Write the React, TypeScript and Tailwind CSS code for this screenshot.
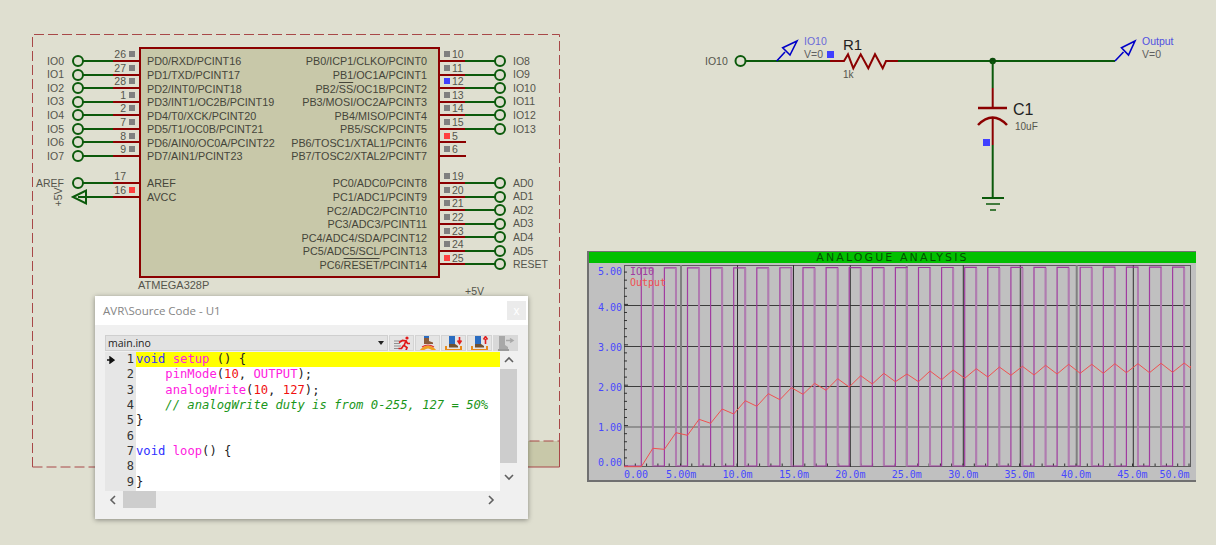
import type { ReactNode } from 'react'

const GREEN = '#0b5a0b'
const RED = '#8b0000'
const GREY_SQ = '#808080'
const RED_SQ = '#ff4040'
const BLUE_SQ = '#4040ff'

type Pin = { name: ReactNode; num: string; net?: string; sq?: string | null; power?: boolean }

const leftPins: (Pin | null)[] = [
  { name: 'PD0/RXD/PCINT16', num: '26', net: 'IO0' },
  { name: 'PD1/TXD/PCINT17', num: '27', net: 'IO1' },
  { name: 'PD2/INT0/PCINT18', num: '28', net: 'IO2' },
  { name: 'PD3/INT1/OC2B/PCINT19', num: '1', net: 'IO3' },
  { name: 'PD4/T0/XCK/PCINT20', num: '2', net: 'IO4' },
  { name: 'PD5/T1/OC0B/PCINT21', num: '7', net: 'IO5' },
  { name: 'PD6/AIN0/OC0A/PCINT22', num: '8', net: 'IO6' },
  { name: 'PD7/AIN1/PCINT23', num: '9', net: 'IO7' },
  null,
  { name: 'AREF', num: '17', net: 'AREF', sq: null },
  { name: 'AVCC', num: '16', sq: RED_SQ, power: true },
]

const rightPins: (Pin | null)[] = [
  { name: 'PB0/ICP1/CLKO/PCINT0', num: '10', net: 'IO8' },
  { name: 'PB1/OC1A/PCINT1', num: '11', net: 'IO9' },
  { name: <>PB2/<span className="overline">SS</span>/OC1B/PCINT2</>, num: '12', net: 'IO10', sq: BLUE_SQ },
  { name: 'PB3/MOSI/OC2A/PCINT3', num: '13', net: 'IO11' },
  { name: 'PB4/MISO/PCINT4', num: '14', net: 'IO12' },
  { name: 'PB5/SCK/PCINT5', num: '15', net: 'IO13' },
  { name: 'PB6/TOSC1/XTAL1/PCINT6', num: '5', sq: RED_SQ },
  { name: 'PB7/TOSC2/XTAL2/PCINT7', num: '6' },
  null,
  { name: 'PC0/ADC0/PCINT8', num: '19', net: 'AD0' },
  { name: 'PC1/ADC1/PCINT9', num: '20', net: 'AD1' },
  { name: 'PC2/ADC2/PCINT10', num: '21', net: 'AD2' },
  { name: 'PC3/ADC3/PCINT11', num: '22', net: 'AD3' },
  { name: 'PC4/ADC4/SDA/PCINT12', num: '23', net: 'AD4' },
  { name: 'PC5/ADC5/SCL/PCINT13', num: '24', net: 'AD5' },
  { name: <>PC6/<span className="overline">RESET</span>/PCINT14</>, num: '25', net: 'RESET', sq: RED_SQ },
]

function LeftPin({ pin }: { pin: Pin | null }) {
  if (!pin) return <div className="h-[13.57px]" />
  const sq = pin.sq === undefined ? GREY_SQ : pin.sq
  return (
    <div className="relative flex h-[13.57px] items-center">
      <span className="w-[32px] whitespace-nowrap text-right text-[10.5px] leading-none text-[#55554c]">{pin.net}</span>
      <svg width="67" height="14" className="ml-[8px] shrink-0 overflow-visible">
        <line x1="40" y1="7" x2="67" y2="7" stroke={RED} strokeWidth="2" />
        <line x1={pin.power ? 6 : 11} y1="7" x2="41" y2="7" stroke={GREEN} strokeWidth="2" />
        {pin.power ? (
          <path d="M1 7 L14 0.5 L14 13.5 Z" fill="none" stroke={GREEN} strokeWidth="2" />
        ) : (
          <circle cx="6" cy="7" r="5" fill="none" stroke={GREEN} strokeWidth="2" />
        )}
      </svg>
      <span className="absolute -top-[7px] right-[13px] text-[10.5px] leading-[14px] text-[#55554c]">{pin.num}</span>
      {sq && <span className="absolute -top-[3px] right-[4px] h-[6px] w-[6px]" style={{ backgroundColor: sq }} />}
    </div>
  )
}

function RightPin({ pin }: { pin: Pin | null }) {
  if (!pin) return <div className="h-[13.57px]" />
  const sq = pin.sq === undefined ? GREY_SQ : pin.sq
  return (
    <div className="relative flex h-[13.57px] items-center">
      <svg width="66" height="14" className="shrink-0 overflow-visible">
        <line x1="0" y1="7" x2="26" y2="7" stroke={RED} strokeWidth="2" />
        {pin.net && (
          <>
            <line x1="25" y1="7" x2="55" y2="7" stroke={GREEN} strokeWidth="2" />
            <circle cx="60" cy="7" r="5" fill="none" stroke={GREEN} strokeWidth="2" />
          </>
        )}
      </svg>
      <span className="ml-[7px] whitespace-nowrap text-[10.5px] leading-none text-[#55554c]">{pin.net}</span>
      <span className="absolute -top-[7px] left-[12px] text-[10.5px] leading-[14px] text-[#55554c]">{pin.num}</span>
      {sq && <span className="absolute -top-[3px] left-[4px] h-[6px] w-[6px]" style={{ backgroundColor: sq }} />}
    </div>
  )
}

function Chip() {
  return (
    <>
      <div className="absolute left-[32px] top-[47px] flex">
        <div className="w-[107px] pt-[7.2px]">
          {leftPins.map((p, i) => <LeftPin key={i} pin={p} />)}
        </div>
        <div className="w-[301px]">
          <div className="flex h-[231px] justify-between border-2 border-[#8b0000] bg-[#c8c8a9] px-[6px] pt-[6px] text-[10.8px] leading-none text-[#45453a]">
            <div>
              {leftPins.map((p, i) => <div key={i} className="flex h-[13.57px] items-center whitespace-nowrap">{p?.name}</div>)}
            </div>
            <div>
              {rightPins.map((p, i) => <div key={i} className="flex h-[13.57px] items-center justify-end whitespace-nowrap pr-[5px]">{p?.name}</div>)}
            </div>
          </div>
          <div className="-ml-[1px] mt-[1px] text-[11px] leading-[13px] text-[#55554c]">ATMEGA328P</div>
        </div>
        <div className="w-[120px] pt-[7.2px]">
          {rightPins.map((p, i) => <RightPin key={i} pin={p} />)}
        </div>
      </div>
      <span className="absolute left-[465px] top-[285px] text-[10.5px] leading-[13px] text-[#55554c]">+5V</span>
      <span className="absolute left-[50px] top-[192px] w-[16px] -rotate-90 whitespace-nowrap text-center text-[10.5px] leading-[13px] text-[#55554c]">+5V</span>
    </>
  )
}

function Sheet() {
  return (
    <svg width="1216" height="545" className="absolute left-0 top-0">
      <rect x="528" y="441" width="31.5" height="26" fill="#c8c8a9" />
      <path d="M32.5 467 L32.5 34.5 L559.5 34.5 L559.5 441 L528 441" fill="none" stroke="#a84848" strokeWidth="1" strokeDasharray="10 4" />
      <path d="M32.5 467 L100 467" fill="none" stroke="#a84848" strokeWidth="1" strokeDasharray="10 4" />
      <path d="M559.5 441 L559.5 467 L528 467" fill="none" stroke="#a84848" strokeWidth="1" />

      {/* RC filter */}
      <circle cx="740.5" cy="61" r="5" fill="none" stroke={GREEN} strokeWidth="2" />
      <line x1="745.5" y1="61" x2="831" y2="61" stroke={GREEN} strokeWidth="2" />
      <path d="M830 61 L844 61 L848 54.3 L853.3 68.3 L860.7 54.3 L868.3 68.3 L875 54.3 L882.7 68.3 L886 61 L899 61" fill="none" stroke={RED} strokeWidth="2" />
      <line x1="898" y1="61" x2="1115" y2="61" stroke={GREEN} strokeWidth="2" />
      <circle cx="992.7" cy="61" r="3.2" fill="#0a4a0a" />
      <line x1="992.7" y1="61" x2="992.7" y2="88" stroke={GREEN} strokeWidth="2" />
      <line x1="992.7" y1="88" x2="992.7" y2="108" stroke={RED} strokeWidth="2" />
      <line x1="978" y1="108" x2="1007" y2="108" stroke={RED} strokeWidth="2.5" />
      <path d="M978 125 Q992.7 110 1007 125" fill="none" stroke={RED} strokeWidth="2.5" />
      <line x1="992.7" y1="118" x2="992.7" y2="145" stroke={RED} strokeWidth="2" />
      <line x1="992.7" y1="145" x2="992.7" y2="198" stroke={GREEN} strokeWidth="2" />
      <line x1="982" y1="198" x2="1004" y2="198" stroke={GREEN} strokeWidth="2" />
      <line x1="986" y1="204" x2="1000" y2="204" stroke={GREEN} strokeWidth="1.5" />
      <line x1="990" y1="210" x2="996" y2="210" stroke={GREEN} strokeWidth="1.5" />

      {/* voltage probes */}
      <path d="M776.7 61 L785 52 M797 41 L782.7 47.7 L790 55 Z" fill="none" stroke="#0000c8" strokeWidth="1.6" />
      <path d="M1115 61 L1123.5 52 M1135 41 L1121.5 47.7 L1128.5 55 Z" fill="none" stroke="#0000c8" strokeWidth="1.6" />
    </svg>
  )
}

function CircuitLabels() {
  return (
    <>
      <span className="absolute left-[705px] top-[54px] text-[10.5px] leading-[14px] text-[#55554c]">IO10</span>
      <div className="absolute left-[804px] top-[35px] text-[10.5px] leading-[13px] text-[#606060]">
        <div className="text-[#6a6ad8]">IO10</div>
        <div className="flex items-center gap-[4px]">V=0<span className="h-[7px] w-[7px] bg-[#4040ff]" /></div>
      </div>
      <div className="absolute left-[843px] top-[36px] flex flex-col gap-[14px]">
        <span className="text-[15px] leading-[18px] text-[#222]">R1</span>
        <span className="text-[10px] leading-[14px] text-[#55554c]">1k</span>
      </div>
      <div className="absolute left-[1142px] top-[35px] text-[10.5px] leading-[13px] text-[#606060]">
        <div className="text-[#5050e0]">Output</div>
        <div>V=0</div>
      </div>
      <div className="absolute left-[1013px] top-[101px] flex flex-col gap-[1px]">
        <span className="text-[16px] leading-[18px] text-[#222]">C1</span>
        <span className="ml-[2px] text-[10px] leading-[14px] text-[#55554c]">10uF</span>
      </div>
      <span className="absolute left-[983px] top-[139px] h-[7px] w-[7px] bg-[#4040ff]" />
    </>
  )
}

function ToolIcon({ kind }: { kind: number }) {
  if (kind === 0) {
    return (
      <svg width="18" height="15" viewBox="0 0 18 15">
        <path d="M1 5h7M1 7.5h6M1 10h7M1 12.5h7" stroke="#909090" strokeWidth="1.2" />
        <circle cx="14" cy="2" r="1.6" fill="#e01818" />
        <path d="M6 6.5 L9.5 4.5 L13 5 L11 9.5 L14 11.5 L13 14.5 M10.5 9.5 L8.5 12.5 L5.5 12.5 M13 5 L14.5 7.5 L17 7.5" fill="none" stroke="#e01818" strokeWidth="1.7" />
      </svg>
    )
  }
  if (kind === 1) {
    return (
      <svg width="20" height="15" viewBox="0 0 20 15">
        <rect x="6" y="0" width="5" height="2" fill="#2a6cc0" />
        <path d="M6 2 h5 v3 l4 1.5 v1.5 h-9 Z" fill="#8a5a3a" />
        <path d="M3 15 Q10 7 17 15" fill="none" stroke="#f0a020" strokeWidth="3" />
        <path d="M4 11 Q10 7 16 11" fill="none" stroke="#e03030" strokeWidth="1.2" />
      </svg>
    )
  }
  if (kind === 4) {
    return (
      <svg width="20" height="15" viewBox="0 0 20 15">
        <path d="M3 0 h6 v9 l3 2 v2 h-9 Z" fill="#a8a8a8" />
        <rect x="2" y="13" width="11" height="2" fill="#9a9a9a" />
        <path d="M10 4.5 h6 M14 2.5 l3 2 l-3 2" fill="none" stroke="#a8a8a8" strokeWidth="1.5" />
      </svg>
    )
  }
  return (
    <svg width="20" height="15" viewBox="0 0 20 15">
      <rect x="5" y="0" width="6" height="8" fill="#2a6cc0" />
      <path d="M5 8 h6 l3 2 v1.5 h-9 Z" fill="#705030" />
      <path d="M2 10 v4 h15 v-4" fill="none" stroke="#e88a18" strokeWidth="2" />
      {kind === 2 ? (
        <path d="M15.5 1 v5 M13.5 4.5 l2 3 l2 -3" fill="none" stroke="#e02020" strokeWidth="1.6" />
      ) : (
        <path d="M15.5 8 v-5 M13.5 3.5 l2 -3 l2 3" fill="none" stroke="#e02020" strokeWidth="1.6" />
      )}
    </svg>
  )
}

function Chevron({ dir }: { dir: 'up' | 'down' | 'left' | 'right' }) {
  const d = { up: 'M1 6 L5 2 L9 6', down: 'M1 3 L5 7 L9 3', left: 'M6 1 L2 5 L6 9', right: 'M3 1 L7 5 L3 9' }[dir]
  return (
    <svg width="10" height="10" viewBox="0 0 10 10">
      <path d={d} fill="none" stroke="#606060" strokeWidth="1.6" />
    </svg>
  )
}

const KW = 'text-[#3030ff]'
const FN = 'text-[#ff20e0]'
const NUM = 'text-[#f01010]'

function CodeWindow() {
  return (
    <div className="absolute left-[95px] top-[296px] flex h-[223px] w-[433px] flex-col bg-[#f0f0f0] shadow-[0_1px_5px_rgba(0,0,0,0.4)]">
      <div className="flex h-[29px] items-center justify-between bg-white pl-[8px] pr-[2px]">
        <span className="font-['Open_Sans'] text-[11.5px] text-[#858585]">AVR\Source Code - U1</span>
        <span className="flex h-[19px] w-[19px] items-center justify-center bg-[#ebebeb] text-[12px] leading-none text-white">x</span>
      </div>
      <div className="flex flex-1 flex-col pl-[10px] pt-[10px]">
        <div className="flex h-[17px] gap-[1px] pb-[1px]">
          <div className="flex h-[16px] w-[283px] items-center justify-between border border-[#cfcfcf] bg-[#e2e2e2] pl-[2px] pr-[3px]">
            <span className="font-['Open_Sans'] text-[10.5px] leading-none text-[#222]">main.ino</span>
            <span className="h-0 w-0 border-x-[3px] border-t-[4px] border-x-transparent border-t-[#222]" />
          </div>
          {[0, 1, 2, 3, 4].map(k => (
            <div key={k} className={k === 4 ? 'flex h-[16px] w-[25px] items-center justify-center overflow-hidden bg-[#d8d8d8]' : 'flex h-[16px] w-[25px] items-center justify-center overflow-hidden border border-[#d4d4d4] bg-[#e4e4e4]'}>
              <ToolIcon kind={k} />
            </div>
          ))}
        </div>
        <div className="flex h-[139px]">
          <div className="relative w-[31px] bg-[#e6e6e6] pr-[2px] text-right font-['DejaVu_Sans_Mono'] text-[12px] text-[#333]">
            <svg width="8" height="8" viewBox="0 0 8 8" className="absolute left-[2px] top-[4px]">
              <path d="M0 4 h4 M3 1 L7 4 L3 7 Z" stroke="#111" strokeWidth="1.4" fill="#111" />
            </svg>
            {[1, 2, 3, 4, 5, 6, 7, 8, 9].map(n => <div key={n} className="h-[15.33px] leading-[15.33px]">{n}</div>)}
          </div>
          <div className="w-[364px] overflow-hidden bg-white font-['DejaVu_Sans_Mono'] text-[12.2px] leading-[15.33px] text-[#222] [&>div]:h-[15.33px] [&>div]:whitespace-pre">
            <div className="bg-[#ffff00]"><span className={KW}>void</span> <span className={FN}>setup</span> () {'{'}</div>
            <div>    <span className={FN}>pinMode</span>(<span className={NUM}>10</span>, <span className={FN}>OUTPUT</span>);</div>
            <div>    <span className={FN}>analogWrite</span>(<span className={NUM}>10</span>, <span className={NUM}>127</span>);</div>
            <div className="italic text-[#1a961a]">    // analogWrite duty is from 0-255, 127 = 50%</div>
            <div>{'}'}</div>
            <div> </div>
            <div><span className={KW}>void</span> <span className={FN}>loop</span>() {'{'}</div>
            <div> </div>
            <div>{'}'}</div>
          </div>
          <div className="flex w-[17px] flex-col items-center">
            <div className="flex h-[17px] items-center"><Chevron dir="up" /></div>
            <div className="h-[94px] w-full bg-[#cdcdcd]" />
            <div className="flex flex-1 items-center"><Chevron dir="down" /></div>
          </div>
        </div>
        <div className="flex h-[17px] w-[395px] items-center">
          <div className="flex w-[18px] justify-center"><Chevron dir="left" /></div>
          <div className="h-full w-[33px] bg-[#cdcdcd]" />
          <div className="flex flex-1 justify-end pr-[4px]"><Chevron dir="right" /></div>
        </div>
      </div>
    </div>
  )
}

// plot coordinates are page pixels, shifted by the plot's own origin
const PX = 624
const PY = 265
const rises = Array.from({ length: 24 }, (_, i) => 641.3 + i * 23.1)

const outputY = [
  466.7, 448.3, 449.3, 432.7, 435.3, 419.3, 423.3, 409, 414, 400.7, 406.3, 393.7, 399.7, 387.7, 394.3, 383.3, 390.3,
  378.7, 387, 375.7, 384, 373.3, 381.7, 374, 381.7, 371, 379.7, 370, 378.3, 368.7, 377, 367, 375.3, 366.3, 375, 365.3,
  374, 364.3, 373.3, 364.3, 373.3, 363.7, 372.7, 363.7, 372.7, 363.3, 372.3, 363, 372, 362.7,
]

const grid: { x: number; thick: boolean }[] = [
  { x: 681, thick: true }, { x: 737.5, thick: false }, { x: 793.5, thick: false }, { x: 850.3, thick: false },
  { x: 906.7, thick: true }, { x: 963.3, thick: false }, { x: 1020.3, thick: false }, { x: 1076.7, thick: true },
  { x: 1133.3, thick: false },
]

function Plot() {
  let wave = `M0 201 H${rises[0] - PX}`
  const falls: number[] = []
  rises.forEach((r, i) => {
    const top = 3 - i * 0.04
    const f = r + 11.55
    wave += ` V${top} H${f - PX} V201`
    falls.push(f - PX)
    if (i < rises.length - 1) wave += ` H${rises[i + 1] - PX}`
  })
  const outPts = [
    `0,201.7`,
    ...outputY.map((y, i) => `${rises[0] - PX + i * 11.55},${y - PY}`),
    `566,${366.7 - PY}`,
  ].join(' ')
  const ticksY = Array.from({ length: 25 }, (_, i) => 201 - i * 8.08)
  const ticksX = Array.from({ length: 51 }, (_, i) => i * 11.3)

  return (
    <svg width="567" height="203" className="block">
      <rect x="0.5" y="0.5" width="566" height="201" fill="none" stroke="#5c5c5c" strokeWidth="1" />
      {[40.5, 81.5, 121.5].map(y => <line key={y} x1="0" x2="566" y1={y} y2={y} stroke="#3c3c3c" strokeWidth="1" />)}
      <line x1="0" x2="566" y1="162" y2="162" stroke="#606060" strokeWidth="1" />
      {grid.map(g => (
        <line key={g.x} x1={g.x - PX} x2={g.x - PX} y1="0" y2="202" stroke={g.thick ? '#808080' : '#303030'} strokeWidth={g.thick ? 2 : 1} />
      ))}
      {ticksY.map((y, i) => <line key={i} x1="0" x2={i % 5 === 0 ? 4 : 3} y1={y} y2={y} stroke="#303030" strokeWidth="1" />)}
      {ticksX.map((x, i) => <line key={i} x1={x} x2={x} y1="198.5" y2="201" stroke="#303030" strokeWidth="1" />)}
      <path d={wave} fill="none" stroke="#a03ca0" strokeWidth="1.2" />
      {falls.map(f => <line key={f} x1={f} x2={f} y1="3" y2="201" stroke="#b07cb0" strokeWidth="2" />)}
      <polyline points={outPts} fill="none" stroke="#f05050" strokeWidth="1" />
    </svg>
  )
}

function Analysis() {
  return (
    <div className="absolute left-[587px] top-[251px] h-[231px] w-[609px] border-b-2 border-l-2 border-t border-[#707070] bg-[#c0c0c0] font-['DejaVu_Sans_Mono'] text-[10px] leading-[12px]">
      <div className="flex h-[11px] items-center justify-center bg-[#00c000] font-['DejaVu_Sans'] text-[11px] leading-none tracking-[2.1px] text-[#005000]">ANALOGUE ANALYSIS</div>
      <div className="flex">
        <div className="flex w-[35px] flex-col gap-[28px] pl-[9px] pt-[3px] text-[#4848ff]">
          <span className="-mb-[4px]">5.00</span>
          <span>4.00</span>
          <span>3.00</span>
          <span>2.00</span>
          <span>1.00</span>
          <span className="-mt-[5px]">0.00</span>
        </div>
        <div className="relative mt-[2px]">
          <Plot />
          <div className="absolute left-[6px] top-[1px] flex flex-col">
            <span className="text-[#a03ca0]">IO10</span>
            <span className="-mt-[1px] text-[#f05050]">Output</span>
          </div>
          <div className="mt-[1px] flex gap-[26.3px] whitespace-nowrap pl-[0px] text-[#4848ff]">
            <span className="-mr-[8.3px]">0.00</span>
            <span>5.00m</span>
            <span>10.0m</span>
            <span>15.0m</span>
            <span>20.0m</span>
            <span>25.0m</span>
            <span>30.0m</span>
            <span>35.0m</span>
            <span>40.0m</span>
            <span>45.0m</span>
            <span className="-ml-[14.3px]">50.0m</span>
          </div>
        </div>
      </div>
    </div>
  )
}

export default function App() {
  return (
    <div className="relative h-[545px] w-[1216px] overflow-hidden bg-[#dfdfd0] font-['Liberation_Sans',Arial,sans-serif]">
      <Sheet />
      <Chip />
      <CircuitLabels />
      <CodeWindow />
      <Analysis />
    </div>
  )
}
